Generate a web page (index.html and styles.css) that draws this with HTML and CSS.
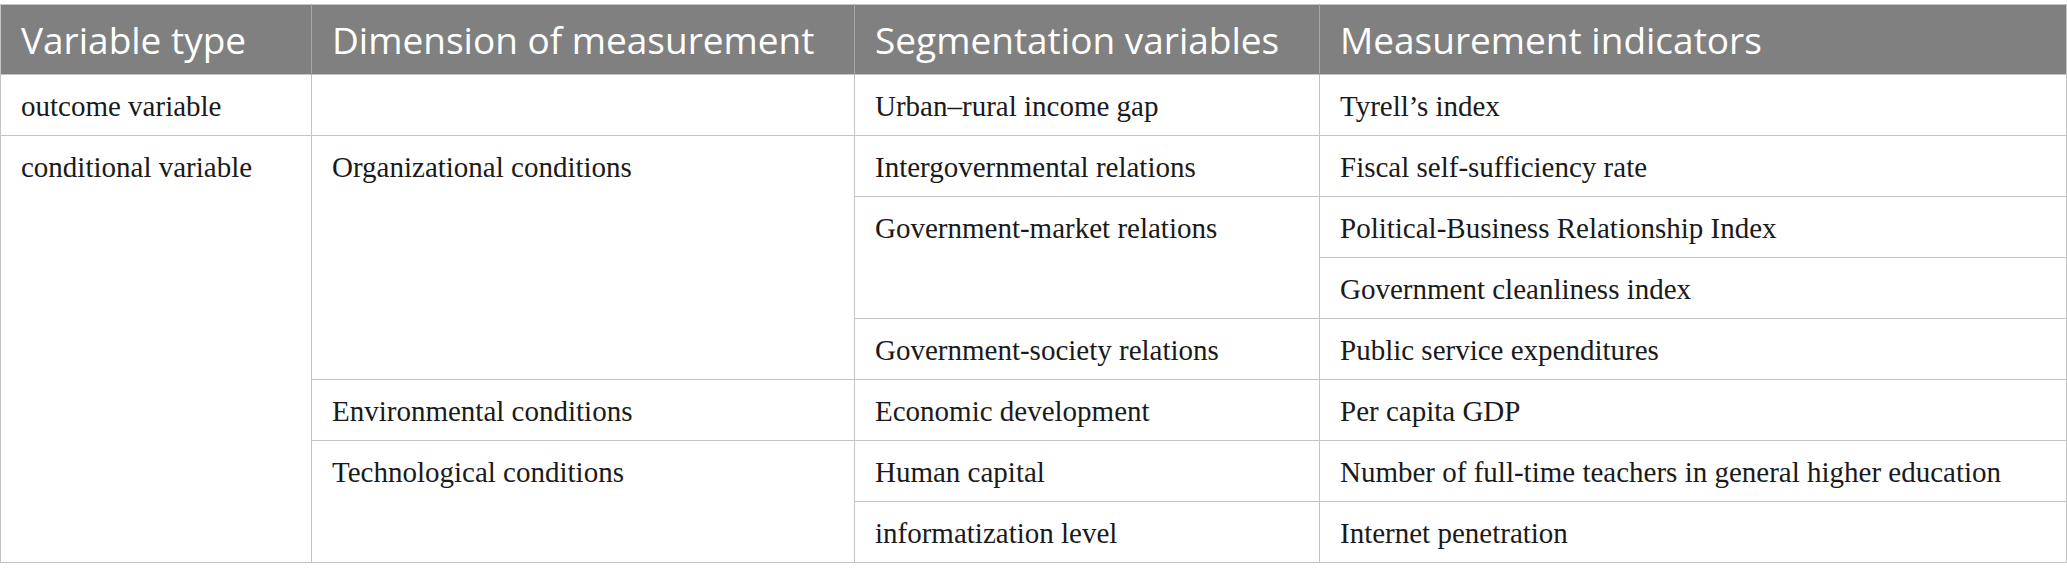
FILE: index.html
```html
<!DOCTYPE html>
<html lang="en">
<head>
<meta charset="utf-8">
<title>Variables table</title>
<link rel="stylesheet" href="styles.css">
</head>
<body>
<div class="wrap">
<table class="vtable">
  <colgroup>
    <col class="c1">
    <col class="c2">
    <col class="c3">
    <col class="c4">
  </colgroup>
  <thead>
    <tr>
      <th>Variable type</th>
      <th>Dimension of measurement</th>
      <th>Segmentation variables</th>
      <th>Measurement indicators</th>
    </tr>
  </thead>
  <tbody>
    <tr>
      <td>outcome variable</td>
      <td></td>
      <td>Urban–rural income gap</td>
      <td>Tyrell’s index</td>
    </tr>
    <tr>
      <td rowspan="8">conditional variable</td>
      <td rowspan="4">Organizational conditions</td>
      <td>Intergovernmental relations</td>
      <td>Fiscal self-sufficiency rate</td>
    </tr>
    <tr>
      <td rowspan="2">Government-market relations</td>
      <td>Political-Business Relationship Index</td>
    </tr>
    <tr>
      <td>Government cleanliness index</td>
    </tr>
    <tr>
      <td>Government-society relations</td>
      <td>Public service expenditures</td>
    </tr>
    <tr>
      <td>Environmental conditions</td>
      <td>Economic development</td>
      <td>Per capita GDP</td>
    </tr>
    <tr>
      <td rowspan="2">Technological conditions</td>
      <td>Human capital</td>
      <td>Number of full-time teachers in general higher education</td>
    </tr>
    <tr>
      <td>informatization level</td>
      <td>Internet penetration</td>
    </tr>
  </tbody>
</table>
</div>
</body>
</html>
```

FILE: styles.css
```css
html, body {
  margin: 0;
  padding: 0;
  background: #ffffff;
}

.wrap {
  padding-top: 4px;
}

.vtable {
  width: 2066px;
  table-layout: fixed;
  border-collapse: collapse;
  border: 1px solid #c4c4c4;
}

.c1 { width: 311px; }
.c2 { width: 543px; }
.c3 { width: 465px; }
.c4 { width: 747px; }

.vtable th {
  height: 69px;
  padding: 0 20px;
  background: #808080;
  color: #ffffff;
  font-family: "Open Sans", "Noto Sans", sans-serif;
  font-weight: 400;
  font-size: 37px;
  text-align: left;
  vertical-align: middle;
  border-left: 1px solid #a6a6a6;
  white-space: nowrap;
}

.vtable th:first-child {
  border-left: none;
}

.vtable td {
  height: 61px;
  padding: 12px 20px 0 20px;
  box-sizing: border-box;
  font-family: "Liberation Serif", "Times New Roman", serif;
  font-size: 29px;
  line-height: 38px;
  color: #1a1a1a;
  text-align: left;
  vertical-align: top;
  border: 1px solid #c4c4c4;
  white-space: nowrap;
}
```
